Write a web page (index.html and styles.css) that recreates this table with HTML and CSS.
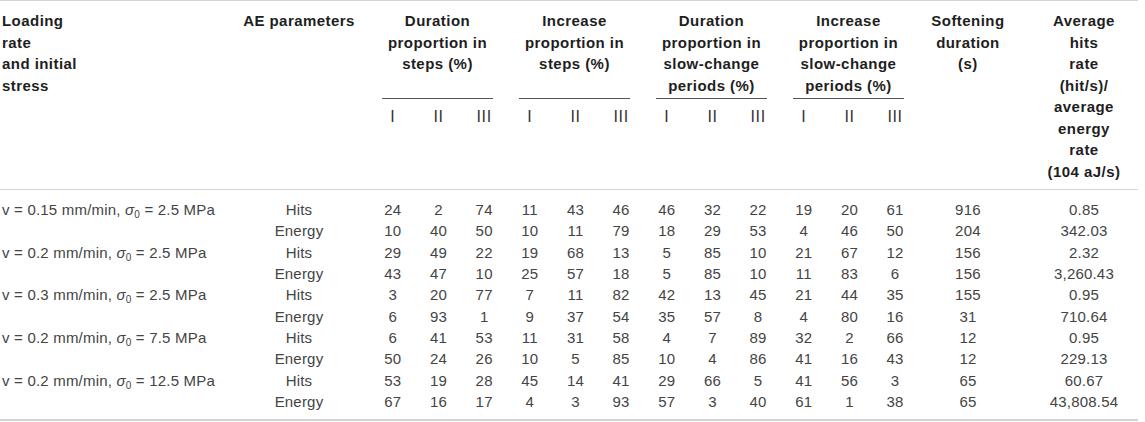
FILE: index.html
```html
<html>
<head>
<link rel="stylesheet" href="styles.css">
</head>
<body>
<table class="results">
	<colgroup>
		<col class="c-load">
		<col class="c-ae">
		<col class="c-sub"><col class="c-sub"><col class="c-sub">
		<col class="c-sub"><col class="c-sub"><col class="c-sub">
		<col class="c-sub"><col class="c-sub"><col class="c-sub">
		<col class="c-sub"><col class="c-sub"><col class="c-sub">
		<col class="c-soft">
		<col class="c-avg">
	</colgroup>
	<thead>
		<tr class="titles">
			<th rowspan="2" class="load">Loading<br>rate<br>and initial<br>stress</th>
			<th rowspan="2">AE parameters</th>
			<th colspan="3" class="group"><div class="group-title">Duration<br>proportion in<br>steps (%)</div></th>
			<th colspan="3" class="group"><div class="group-title">Increase<br>proportion in<br>steps (%)</div></th>
			<th colspan="3" class="group"><div class="group-title">Duration<br>proportion in<br>slow-change<br>periods (%)</div></th>
			<th colspan="3" class="group"><div class="group-title">Increase<br>proportion in<br>slow-change<br>periods (%)</div></th>
			<th rowspan="2">Softening<br>duration<br>(s)</th>
			<th rowspan="2" class="avg">Average<br>hits<br>rate<br>(hit/s)/<br>average<br>energy<br>rate<br>(104 aJ/s)</th>
		</tr>
		<tr class="stages">
			<th>I</th><th>II</th><th>III</th>
			<th>I</th><th>II</th><th>III</th>
			<th>I</th><th>II</th><th>III</th>
			<th>I</th><th>II</th><th>III</th>
		</tr>
	</thead>
	<tbody>
		<tr>
			<td class="load">v = 0.15 mm/min, <i>σ</i><sub>0</sub> = 2.5 MPa</td><td>Hits</td>
			<td>24</td><td>2</td><td>74</td><td>11</td><td>43</td><td>46</td>
			<td>46</td><td>32</td><td>22</td><td>19</td><td>20</td><td>61</td>
			<td>916</td><td class="avg">0.85</td>
		</tr>
		<tr>
			<td class="load"></td><td>Energy</td>
			<td>10</td><td>40</td><td>50</td><td>10</td><td>11</td><td>79</td>
			<td>18</td><td>29</td><td>53</td><td>4</td><td>46</td><td>50</td>
			<td>204</td><td class="avg">342.03</td>
		</tr>
		<tr>
			<td class="load">v = 0.2 mm/min, <i>σ</i><sub>0</sub> = 2.5 MPa</td><td>Hits</td>
			<td>29</td><td>49</td><td>22</td><td>19</td><td>68</td><td>13</td>
			<td>5</td><td>85</td><td>10</td><td>21</td><td>67</td><td>12</td>
			<td>156</td><td class="avg">2.32</td>
		</tr>
		<tr>
			<td class="load"></td><td>Energy</td>
			<td>43</td><td>47</td><td>10</td><td>25</td><td>57</td><td>18</td>
			<td>5</td><td>85</td><td>10</td><td>11</td><td>83</td><td>6</td>
			<td>156</td><td class="avg">3,260.43</td>
		</tr>
		<tr>
			<td class="load">v = 0.3 mm/min, <i>σ</i><sub>0</sub> = 2.5 MPa</td><td>Hits</td>
			<td>3</td><td>20</td><td>77</td><td>7</td><td>11</td><td>82</td>
			<td>42</td><td>13</td><td>45</td><td>21</td><td>44</td><td>35</td>
			<td>155</td><td class="avg">0.95</td>
		</tr>
		<tr>
			<td class="load"></td><td>Energy</td>
			<td>6</td><td>93</td><td>1</td><td>9</td><td>37</td><td>54</td>
			<td>35</td><td>57</td><td>8</td><td>4</td><td>80</td><td>16</td>
			<td>31</td><td class="avg">710.64</td>
		</tr>
		<tr>
			<td class="load">v = 0.2 mm/min, <i>σ</i><sub>0</sub> = 7.5 MPa</td><td>Hits</td>
			<td>6</td><td>41</td><td>53</td><td>11</td><td>31</td><td>58</td>
			<td>4</td><td>7</td><td>89</td><td>32</td><td>2</td><td>66</td>
			<td>12</td><td class="avg">0.95</td>
		</tr>
		<tr>
			<td class="load"></td><td>Energy</td>
			<td>50</td><td>24</td><td>26</td><td>10</td><td>5</td><td>85</td>
			<td>10</td><td>4</td><td>86</td><td>41</td><td>16</td><td>43</td>
			<td>12</td><td class="avg">229.13</td>
		</tr>
		<tr>
			<td class="load">v = 0.2 mm/min, <i>σ</i><sub>0</sub> = 12.5 MPa</td><td>Hits</td>
			<td>53</td><td>19</td><td>28</td><td>45</td><td>14</td><td>41</td>
			<td>29</td><td>66</td><td>5</td><td>41</td><td>56</td><td>3</td>
			<td>65</td><td class="avg">60.67</td>
		</tr>
		<tr>
			<td class="load"></td><td>Energy</td>
			<td>67</td><td>16</td><td>17</td><td>4</td><td>3</td><td>93</td>
			<td>57</td><td>3</td><td>40</td><td>61</td><td>1</td><td>38</td>
			<td>65</td><td class="avg">43,808.54</td>
		</tr>
	</tbody>
</table>
</body>
</html>
```

FILE: styles.css
```css
body {
	margin: 0;
	background: #fff;
	font-family: 'Liberation Sans', Arial, sans-serif;
}

.results {
	width: 1138px;
	table-layout: fixed;
	border-collapse: collapse;
	border-top: 1px solid #d4d4d4;
	border-bottom: 2px solid #d4d4d4;
}

.c-load { width: 228px; }
.c-ae { width: 142px; }
.c-sub { width: 45.66px; }
.c-soft { width: 100px; }
.c-avg { width: 120px; }

.results th,
.results td {
	padding: 0;
	text-align: center;
}

.results .load {
	text-align: left;
	padding-left: 2px;
}

.results .avg {
	padding-left: 12px;
}

/* header */
.results thead {
	border-bottom: 1px solid #d4d4d4;
}

.titles { height: 99px; }
.stages { height: 90px; }

.results th {
	vertical-align: top;
	font-size: 15px;
	font-weight: bold;
	line-height: 21.5px;
	letter-spacing: 0.45px;
	color: #1e1e1e;
	padding-top: 9px;
}

.results .group {
	padding-top: 9px;
}

.group-title {
	height: 86px;
	margin: 0 14px 0 12px;
	padding-bottom: 2px;
	border-bottom: 1px solid #555;
}

.stages th {
	font-size: 16px;
	font-weight: normal;
	letter-spacing: 0.6px;
	color: #333;
	padding-top: 6px;
}

/* body */
.results td {
	font-size: 15px;
	line-height: 21.33px;
	letter-spacing: 0.2px;
	color: #444;
	white-space: nowrap;
}

.results tbody tr:first-child td {
	padding-top: 9px;
}

.results tbody tr:last-child td {
	padding-bottom: 7px;
}

.results sub {
	font-size: 10px;
	line-height: 0;
	vertical-align: -3px;
}
```
